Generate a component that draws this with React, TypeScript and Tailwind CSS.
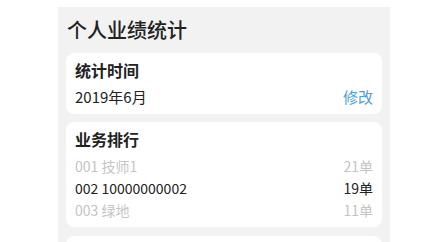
import React from "react";

const font = { fontFamily: '"Noto Sans CJK SC", "Noto Sans", sans-serif' };

export default function App() {
  const rows = [
    { id: "001", name: "技师1", count: "21单", active: false },
    { id: "002", name: "10000000002", count: "19单", active: true },
    { id: "003", name: "绿地", count: "11单", active: false },
  ];
  return (
    <div className="w-[438px] h-[242px] bg-white overflow-hidden" style={font}>
      <div className="ml-[58px] mt-[7px] w-[332px] h-[260px] bg-[#f2f2f2] px-[8px]">
        <div className="pl-[1px] pt-[9px] pb-[9px] text-[20px] leading-[28px] font-medium text-[#222]">
          个人业绩统计
        </div>
        <div className="bg-white rounded-[8px] px-[9px] pt-[5px] pb-[5px]">
          <div className="text-[16px] leading-[24px] font-bold text-[#222]">统计时间</div>
          <div className="flex items-center justify-between mt-[3px] leading-[24px]">
            <span className="text-[15px] text-[#222]">2019年6月</span>
            <span className="text-[15px] text-[#4a9fd6]">修改</span>
          </div>
        </div>
        <div className="bg-white rounded-[8px] px-[9px] pt-[5px] pb-[6px] mt-[8px]">
          <div className="text-[16px] leading-[24px] font-bold text-[#222]">业务排行</div>
          <div className="flex flex-col mt-[4px]">
            {rows.map((r) => (
              <div
                key={r.id}
                className={
                  r.active
                    ? "flex justify-between text-[14px] leading-[22px] text-[#222]"
                    : "flex justify-between text-[14px] leading-[22px] text-[#c4c4c4]"
                }
              >
                <span>
                  {r.id} {r.name}
                </span>
                <span>{r.count}</span>
              </div>
            ))}
          </div>
        </div>
        <div className="bg-white rounded-[8px] mt-[9px] h-[60px]"></div>
      </div>
    </div>
  );
}
